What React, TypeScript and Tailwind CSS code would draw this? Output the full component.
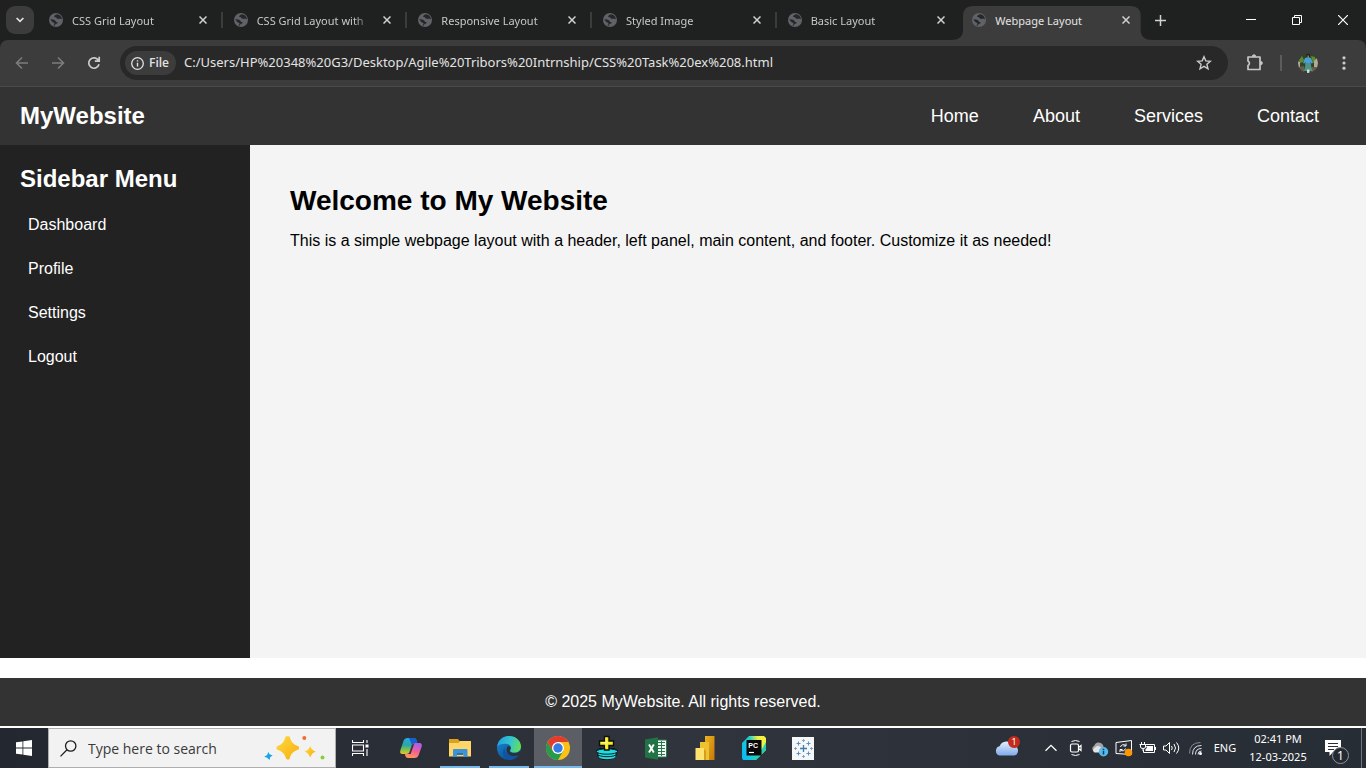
import type { ReactNode } from "react";

const tabs = [
  "CSS Grid Layout",
  "CSS Grid Layout with",
  "Responsive Layout",
  "Styled Image",
  "Basic Layout",
  "Webpage Layout",
];

const navLinks = ["Home", "About", "Services", "Contact"];
const menuLinks = ["Dashboard", "Profile", "Settings", "Logout"];

function GlobeIcon() {
  return (
    <svg className="size-3.5 shrink-0" viewBox="0 0 14 14" aria-hidden="true">
      <circle cx="7" cy="7" r="7" fill="#5f6368" />
      <path
        d="M8.2 1.3 6.1 1.9 5 3.4l1 .8 1.1 0 .7 1.2 1.5.5 1.5-.4 1.6.8.5-.9A6 6 0 0 0 8.2 1.3ZM1.2 6.3 4.3 6.6l1.9 1 .9 1.4 1.6.3-.5 1.2-1.7.6-.6 1.7A6 6 0 0 1 4.3 12l1.2-.5-.2-1.5-1.7-.8L2.3 7.7Z"
        fill="#25272a"
      />
    </svg>
  );
}

function CloseGlyph() {
  return (
    <svg className="size-2" viewBox="0 0 8 8" aria-hidden="true">
      <path d="M.5.5 7.5 7.5M7.5.5.5 7.5" stroke="#d0d1d1" strokeWidth="1.5" />
    </svg>
  );
}

function Tab({ title, active, divided }: { title: string; active: boolean; divided: boolean }) {
  return (
    <div className="relative flex h-10 min-w-0 flex-1 items-center pr-4 pl-[11px]">
      {active && (
        <svg
          className="absolute inset-y-0 left-0 h-10 w-full overflow-visible"
          viewBox="0 0 185 40"
          preserveAspectRatio="none"
          aria-hidden="true"
        >
          <path
            d="M-10 40Q2 40 2 30V16Q2 6 12 6H170Q180 6 180 16V30Q180 40 192 40Z"
            fill="#3c3c3c"
          />
        </svg>
      )}
      <button className="relative flex min-w-0 flex-1 items-center gap-[9px] text-left">
        <GlobeIcon />
        <span
          className={
            active
              ? "min-w-0 flex-1 overflow-hidden pt-px text-[11px] leading-5 whitespace-nowrap text-[#e3e3e3]"
              : "min-w-0 flex-1 overflow-hidden mask-r-from-85% pt-px text-[11px] leading-5 whitespace-nowrap text-[#c7c8c8]"
          }
        >
          {title}
        </span>
      </button>
      <button className="relative ml-3 flex size-2 items-center" aria-label={"Close " + title}>
        <CloseGlyph />
      </button>
      {divided && <span className="absolute top-3 right-0 h-4 w-0.5 bg-[#3c3c3c]" />}
    </div>
  );
}

function WindowButtons() {
  return (
    <div className="ml-auto flex">
      <button className="flex h-10 w-[46px] items-center justify-center" aria-label="Minimize">
        <svg width="10" height="10" viewBox="0 0 10 10">
          <path d="M0 4.5H10" stroke="#fff" />
        </svg>
      </button>
      <button className="flex h-10 w-[46px] items-center justify-center" aria-label="Restore">
        <svg width="10" height="10" viewBox="0 0 10 10" fill="none" stroke="#fff">
          <path d="M.5 2.5H7.5V9.5H.5ZM2.5 2.5V.5H9.5V7.5H7.5" />
        </svg>
      </button>
      <button className="flex h-10 w-[46px] items-center justify-center" aria-label="Close window">
        <svg width="10" height="10" viewBox="0 0 10 10">
          <path d="M0 0 10 10M10 0 0 10" stroke="#fff" strokeWidth="1.2" />
        </svg>
      </button>
    </div>
  );
}

function Avatar() {
  return (
    <svg width="20" height="20" viewBox="0 0 20 20" aria-hidden="true">
      <defs>
        <clipPath id="avatar">
          <circle cx="10" cy="10" r="10" />
        </clipPath>
      </defs>
      <g clipPath="url(#avatar)">
        <path d="M0 0H20V20H0Z" fill="#2f4428" />
        <path d="M1 7 4 3 6 7 5 9 2 10ZM13 3 17 4 18 8 15 10Z" fill="#5f8a35" />
        <path d="M0 8 2 9 2 15 0 16ZM16 8 20 4V17L16 14Z" fill="#b5a996" />
        <path d="M0 14 6 13 6 20H0ZM14 14 19 14 17 20H13Z" fill="#6b5a4e" />
        <path d="M8.5 1H12V4H8.5Z" fill="#2a201c" />
        <path d="M9.5 2.5H11V4.5H9.5Z" fill="#a87860" />
        <path d="M7 5 10 4.3 13 5 15 10 13.5 10.5 12.5 9V12H7.5V9L6.3 10.5 5 10Z" fill="#4a9fd4" />
        <path d="M7.8 10H12.4L14.5 18H6Z" fill="#4f9487" />
        <path d="M9 16.5H11.5V20H9Z" fill="#dcd5d0" />
      </g>
    </svg>
  );
}

function Browser() {
  return (
    <header className="bg-[#1f2120] font-['Noto_Sans',sans-serif]">
      <div className="flex h-10 items-center pl-1.5">
        <button
          className="mr-1 flex size-7 shrink-0 items-center justify-center rounded-[9px] bg-[#3c3c3c]"
          aria-label="Search tabs"
        >
          <svg width="8" height="6" viewBox="0 0 8 6" fill="none" stroke="#e3e3e3" strokeWidth="1.7">
            <path d="M.6 1 4 4.4 7.4 1" />
          </svg>
        </button>
        <div className="flex max-w-[1108px] min-w-0 flex-1">
          {tabs.map((title, i) => (
            <Tab key={title} title={title} active={i === 5} divided={i < 4} />
          ))}
        </div>
        <button className="flex size-7 items-center justify-center" aria-label="New tab">
          <svg width="11" height="11" viewBox="0 0 11 11" stroke="#d0d1d1" strokeWidth="1.5">
            <path d="M5.5 0V11M0 5.5H11" />
          </svg>
        </button>
        <WindowButtons />
      </div>
      <div className="flex h-[47px] items-center rounded-t-lg border-b border-[#4a4a4a] bg-[#3c3c3c] pr-3">
        <div className="flex w-[120px] shrink-0 items-center gap-[22px] pl-[15px]">
          <button className="size-3.5" aria-label="Back">
            <svg width="14" height="14" viewBox="0 0 14 14" fill="none" stroke="#7c7c7c" strokeWidth="1.6">
              <path d="M13 7H2M7 1.5 1.5 7 7 12.5" />
            </svg>
          </button>
          <button className="size-3.5" aria-label="Forward">
            <svg width="14" height="14" viewBox="0 0 14 14" fill="none" stroke="#7c7c7c" strokeWidth="1.6">
              <path d="M1 7H12M7 1.5 12.5 7 7 12.5" />
            </svg>
          </button>
          <button className="size-3.5" aria-label="Reload">
            <svg width="14" height="14" viewBox="0 0 14 14" fill="none" stroke="#cbcbcb" strokeWidth="1.7">
              <path d="M11.5 4.5A5.2 5.2 0 1 0 12 8.3M12.2.8V5.1H7.8" />
            </svg>
          </button>
        </div>
        <div className="flex h-[34px] min-w-0 flex-1 items-center rounded-full bg-[#282828] pr-4 pl-[5px]">
          <button className="mr-2 flex h-6 w-[51px] shrink-0 items-center justify-start gap-[5px] rounded-full bg-[#3c3c3c] pl-1.5 font-['Open_Sans',sans-serif] text-xs font-semibold text-[#e3e3e3]">
            <svg width="13" height="13" viewBox="0 0 13 13" aria-hidden="true">
              <circle cx="6.5" cy="6.5" r="5.8" fill="none" stroke="#e3e3e3" strokeWidth="1.3" />
              <path d="M6.5 5.7V9.6M6.5 3.2V4.6" stroke="#e3e3e3" strokeWidth="1.4" />
            </svg>
            File
          </button>
          <input
            className="min-w-0 flex-1 bg-transparent text-[13px] text-[#e3e3e3] outline-none"
            aria-label="Address"
            defaultValue="C:/Users/HP%20348%20G3/Desktop/Agile%20Tribors%20Intrnship/CSS%20Task%20ex%208.html"
          />
          <button className="size-4" aria-label="Bookmark">
            <svg width="16" height="16" viewBox="0 0 16 16" fill="none" stroke="#cbcbcb" strokeWidth="1.4">
              <path d="M8 1.7 9.8 5.9 14.4 6.3 10.9 9.3 12 13.8 8 11.4 4 13.8 5.1 9.3 1.6 6.3 6.2 5.9Z" />
            </svg>
          </button>
        </div>
        <div className="flex items-center">
          <button className="ml-[18px] size-[18px]" aria-label="Extensions">
            <svg width="18" height="18" viewBox="0 0 18 18" fill="none" stroke="#c7c7c7" strokeWidth="1.7">
              <path d="M2 3H14V15.5H2V11.5A2.5 2.5 0 0 0 2 7Z" strokeLinejoin="round" />
              <path d="M6.2 2.5A1.8 1.8 0 0 1 9.8 2.5ZM14.6 7.3A1.8 1.8 0 0 1 14.6 10.9Z" fill="#c7c7c7" strokeWidth=".8" />
            </svg>
          </button>
          <span className="ml-4 h-4 w-0.5 bg-[#5c5c5c]" />
          <button className="ml-4 size-5" aria-label="Profile">
            <Avatar />
          </button>
          <button className="ml-4 flex h-5 w-5 items-center justify-center" aria-label="Browser menu">
            <svg width="4" height="14" viewBox="0 0 4 14" fill="#cbcbcb">
              <circle cx="2" cy="1.8" r="1.6" />
              <circle cx="2" cy="7" r="1.6" />
              <circle cx="2" cy="12.2" r="1.6" />
            </svg>
          </button>
        </div>
      </div>
    </header>
  );
}

function WebPage() {
  return (
    <div className="flex flex-1 flex-col font-['Liberation_Sans',Arial,sans-serif]">
      <header className="flex h-[58px] items-center justify-between bg-[#333] px-5 text-white">
        <h2 className="text-2xl font-bold">MyWebsite</h2>
        <nav className="flex">
          {navLinks.map((label) => (
            <a key={label} href="#" className="px-[27px] text-lg">
              {label}
            </a>
          ))}
        </nav>
      </header>
      <div className="flex flex-1">
        <aside className="w-[250px] shrink-0 bg-[#222] p-5 text-white">
          <h2 className="text-2xl leading-7 font-bold">Sidebar Menu</h2>
          <ul className="mt-2.5">
            {menuLinks.map((label) => (
              <li key={label}>
                <a href="#" className="block px-2 text-base leading-[44px]">
                  {label}
                </a>
              </li>
            ))}
          </ul>
        </aside>
        <main className="min-w-0 flex-1 bg-[#f4f4f4] p-10 text-black">
          <h1 className="text-[28px] leading-8 font-bold">Welcome to My Website</h1>
          <p className="mt-3 text-base">
            This is a simple webpage layout with a header, left panel, main content, and footer. Customize it as needed!
          </p>
        </main>
      </div>
      <footer className="mt-5 mb-0.5 flex h-12 items-center justify-center bg-[#333] text-base text-white">
        © 2025 MyWebsite. All rights reserved.
      </footer>
    </div>
  );
}

function Sparkles() {
  return (
    <svg width="62" height="26" viewBox="0 0 62 26" aria-hidden="true">
      <defs>
        <linearGradient id="gold" x1="0" y1="0" x2="1" y2="1">
          <stop offset="0" stopColor="#ffda3b" />
          <stop offset="1" stopColor="#f7ad12" />
        </linearGradient>
      </defs>
      <path d="M21.5 1.5Q24 .8 25.7 1.5C27 7 29 9.5 34.5 11.2Q36 13 34.5 14.5C29 16.5 27 18.5 25.5 24Q24 25 22.3 24C20.5 18.5 18.5 16.5 13 14.5Q11.6 13 13 11.2C18.5 9.5 20 7 21.5 1.5Z" fill="url(#gold)" />
      <path d="M46.2 11Q47.5 15.3 51.7 16.5Q47.7 18 46.2 22.5Q44.8 18 40.6 16.5Q44.8 15.3 46.2 11Z" fill="url(#gold)" />
      <path d="M4.2 17 5.6 19.3 8.7 20.5 6.3 22 5.5 25 3.2 22.8.2 21.8 3.2 20Z" fill="#15a5ea" />
      <circle cx="40.3" cy="3" r="2" fill="#f36c2c" />
      <circle cx="58.5" cy="22.5" r="2" fill="#91c83e" />
    </svg>
  );
}

function CopilotIcon() {
  return (
    <svg width="24" height="24" viewBox="0 0 24 24">
      <defs>
        <linearGradient id="cpl" x1="0" y1="0" x2="0" y2="1">
          <stop offset="0" stopColor="#2aa8ec" />
          <stop offset=".45" stopColor="#29a8a0" />
          <stop offset=".75" stopColor="#83c54a" />
          <stop offset="1" stopColor="#f3c22c" />
        </linearGradient>
        <linearGradient id="cpr" x1=".6" y1="0" x2=".3" y2="1">
          <stop offset="0" stopColor="#a95df0" />
          <stop offset=".5" stopColor="#f0609a" />
          <stop offset="1" stopColor="#ff9b54" />
        </linearGradient>
      </defs>
      <path d="M8.5 2H15Q17 2 17.7 4.5L18.3 7H15.5Q13.3 7 12.6 9.5L10.5 16Q9.7 18 7.5 18H3.5Q.5 18 1.3 14.5L4.5 5Q5.5 2 8.5 2Z" fill="url(#cpl)" />
      <path d="M10 2H15Q17 2 17.7 4.5L18.3 7H15.5Q13.5 7 12.8 8.8Z" fill="#1760d2" />
      <path d="M15.5 22H9Q7 22 6.4 20L5.7 17.5H8.5Q10.5 17.5 11.3 15L13.4 9Q14.2 7 16.4 7H20.5Q23.5 7 22.7 10.5L19.5 19.5Q18.5 22 15.5 22Z" fill="url(#cpr)" />
      <path d="M12 13 13.4 9 15.3 7.6 11.6 18H8.8Q10.7 17.5 11.3 15Z" fill="#2c3039" />
    </svg>
  );
}

function ExplorerIcon() {
  return (
    <svg width="22" height="20" viewBox="0 0 22 20">
      <path d="M0 1H9L11 3.5H21.5V17.5H0Z" fill="#dca11b" />
      <path d="M0 5H9.5L11 3H22V18.5H0Z" fill="#ffd667" />
      <path d="M4 19V12Q4 11 5 11H17.5Q18.5 11 18.5 12V19H14.5V15H8V19Z" fill="#3e93d6" />
      <path d="M8 15H14.5V17H8Z" fill="#2676b7" />
    </svg>
  );
}

function EdgeIcon() {
  return (
    <svg width="24" height="24" viewBox="0 0 24 24">
      <defs>
        <linearGradient id="edgeTop" x1="0" y1=".3" x2="1" y2=".5">
          <stop offset="0" stopColor="#239fe0" />
          <stop offset=".55" stopColor="#35c5cd" />
          <stop offset="1" stopColor="#62df58" />
        </linearGradient>
        <linearGradient id="edgeLow" x1="0" y1="0" x2=".7" y2="1">
          <stop offset="0" stopColor="#188ddb" />
          <stop offset="1" stopColor="#0b4c8d" />
        </linearGradient>
      </defs>
      <circle cx="12" cy="12" r="12" fill="url(#edgeLow)" />
      <path d="M.2 10.5C1.2 4 6 0 12 0c7 0 12 5 12 10.5 0 4-3 6-6.5 6-3 0-4.800-1-4.300-2.200C15.500 11 13 8 9 7.800 5 7.500 1.300 8.800.2 10.500Z" fill="url(#edgeTop)" />
      <path d="M9.500 9.500C5.500 12.500 8 18.200 14.500 19.700c3 .7 6.200-.2 7.500-.9C19.500 22.500 15.500 24 12 24 6.500 22.700 3 15.500 9.500 9.500Z" fill="#1054a1" />
      <path d="M13 14C11.800 15.500 13.500 17 17 17.200c3 .1 5.500-1.100 6.500-2.700.5 2-1 4-1.900 4.700-5.600 2.200-12.900-.3-12-6.200.2-1.300.9-2.300 1.700-2.900 1.900.5 2.900 2 1.700 3.900Z" fill="#2c3039" />
    </svg>
  );
}

function ChromeIcon() {
  return (
    <svg width="24" height="24" viewBox="0 0 24 24">
      <circle cx="12" cy="12" r="12" fill="#fbc116" />
      <path d="M12 12 17.2 15 12 24A12 12 0 0 1 1.6 6L6.8 15Z" fill="#269b4b" />
      <path d="M12 6H22.4A12 12 0 0 0 1.6 6L6.8 15 12 12Z" fill="#e33b2e" />
      <circle cx="12" cy="12" r="6" fill="#fff" />
      <circle cx="12" cy="12" r="4.7" fill="#347be5" />
    </svg>
  );
}

function DiscPlusIcon() {
  return (
    <svg width="24" height="26" viewBox="0 0 24 26">
      <path d="M1 15.5 5 13H19L23 15.5V17L21.5 18 22 20 19 21.5V23L14 25H8L4 23 2 20 2.5 18 1 17Z" fill="#071012" />
      <ellipse cx="12" cy="21.5" rx="8.500" ry="2.700" fill="#24d9df" />
      <ellipse cx="12" cy="19" rx="9.500" ry="2.700" fill="#24d9df" stroke="#06282b" />
      <ellipse cx="12" cy="16.500" rx="10.500" ry="2.700" fill="#24d9df" stroke="#06282b" />
      <path d="M9.500 1.500H14V6H18.500V10.500H14V15H9.500V10.500H4.500V6H9.500Z" fill="#f7ed20" stroke="#101006" strokeWidth="1.4" />
      <path d="M11 2.500V13M6 7.500H13" stroke="#fff78b" />
    </svg>
  );
}

function ExcelIcon() {
  return (
    <svg width="22" height="23" viewBox="0 0 22 23">
      <path d="M12 3H21.5V20H12Z" fill="#f3f7f4" stroke="#277a4c" strokeWidth="1" />
      <path d="M13 5.5H20M13 8.5H20M13 11.5H20M13 14.5H20M13 17.5H20" stroke="#277a4c" />
      <path d="M16.5 4V19" stroke="#277a4c" />
      <path d="M0 2.5 13 .2V22.8L0 20.5Z" fill="#217346" />
      <path d="M4 7.5 8.8 15.5M8.8 7.5 4 15.5" stroke="#fff" strokeWidth="1.9" />
    </svg>
  );
}

function PowerBiIcon() {
  return (
    <svg width="20" height="24" viewBox="0 0 20 24">
      <defs>
        <linearGradient id="pbi" x1="0" y1="0" x2="1" y2="1">
          <stop offset="0" stopColor="#eeb41f" />
          <stop offset="1" stopColor="#c57708" />
        </linearGradient>
      </defs>
      <path d="M10 0H19.5V24H10Z" fill="url(#pbi)" />
      <path d="M5 6H14V24H5Z" fill="#edc22f" />
      <path d="M.5 12H9V24H.5Z" fill="#ffe36f" />
      <path d="M9 13 11 15V24H9Z" fill="#d89c1d" />
    </svg>
  );
}

function PyCharmIcon() {
  return (
    <svg width="24" height="24" viewBox="0 0 24 24">
      <defs>
        <linearGradient id="pyc" x1="0" y1=".6" x2="1" y2=".2">
          <stop offset="0" stopColor="#0bbcf0" />
          <stop offset=".45" stopColor="#20cfca" />
          <stop offset=".75" stopColor="#f2ef45" />
        </linearGradient>
      </defs>
      <path d="M7 0H22L24 2V14L14 24H1L0 22V7Z" fill="url(#pyc)" />
      <path d="M24 6V14L14 24H10L20 13Z" fill="#21d0b4" />
      <path d="M4.5 4H19.5V19.5H4.5Z" fill="#080808" />
      <text x="6.3" y="12" fontSize="7" fontWeight="700" fill="#fff" fontFamily="Liberation Sans">
        PC
      </text>
      <path d="M7 16.5H12" stroke="#fff" strokeWidth="1.2" />
    </svg>
  );
}

function TableauIcon() {
  return (
    <svg width="22" height="23" viewBox="0 0 22 23" fill="none" stroke="#7fa6c6">
      <path d="M0 0H22V23H0Z" fill="#f5f6f7" stroke="none" />
      <path d="M11.5 8V15M8 11.5H15" stroke="#3c7cae" strokeWidth="1.3" />
      <path d="M11.5 2V5M10 3.5H13M11.5 18V21M10 19.5H13M3.5 10V13M2 11.5H5M19.5 10V13M18 11.5H21" />
      <path d="M6.5 4.5V8.5M4.5 6.5H8.5M16.5 4.5V8.5M14.5 6.5H18.5M6.5 14.5V18.5M4.5 16.5H8.5M16.5 14.5V18.5M14.5 16.5H18.5" stroke="#5c90b9" />
    </svg>
  );
}

function TaskButton({ label, running, active, children }: { label: string; running?: boolean; active?: boolean; children: ReactNode }) {
  return (
    <button
      aria-label={label}
      className={
        active
          ? "relative flex h-10 w-12 items-center justify-center bg-[#5b5e65]"
          : "relative flex h-10 w-12 items-center justify-center"
      }
    >
      {children}
      {running && (
        <span
          className={
            active
              ? "absolute inset-x-0 bottom-0 h-0.5 bg-[#76b9ed]"
              : "absolute inset-x-1 bottom-0 h-0.5 bg-[#76b9ed]"
          }
        />
      )}
    </button>
  );
}

function TrayButton({ label, children }: { label: string; children: ReactNode }) {
  return (
    <button className="flex h-10 w-6 items-center justify-center" aria-label={label}>
      <svg width="18" height="18" viewBox="0 0 18 18" fill="none" stroke="#fff" strokeWidth="1">
        {children}
      </svg>
    </button>
  );
}

function Taskbar() {
  return (
    <footer className="flex h-10 items-center bg-linear-to-r from-[#222730] via-[#30343c] to-[#272d35] font-['Noto_Sans',sans-serif] text-white">
      <button className="flex h-10 w-12 items-center justify-center" aria-label="Start">
        <svg width="16" height="16" viewBox="0 0 16 16" fill="#fff">
          <path d="M0 2.3 6.5 1.4V7.5H0ZM7.3 1.3 16 0V7.5H7.3ZM0 8.4H6.5V14.6L0 13.7ZM7.3 8.4H16V16L7.3 14.8Z" />
        </svg>
      </button>
      <label className="flex h-10 w-72 items-center border border-[#aeaeae] bg-[#f2f2f2] pr-[9px] pl-[11px]">
        <svg width="17" height="17" viewBox="0 0 17 17" fill="none" stroke="#1d1d1d" strokeWidth="1.3" aria-hidden="true">
          <circle cx="10.7" cy="6" r="5.2" />
          <path d="M7 9.8.5 16.4" />
        </svg>
        <input
          className="ml-[11px] min-w-0 flex-1 bg-transparent pt-px font-['Open_Sans',sans-serif] text-sm text-[#333] outline-none placeholder:text-[#3a3a3a]"
          type="search"
          aria-label="Type here to search"
          placeholder="Type here to search"
        />
        <Sparkles />
      </label>
      <button className="mr-[3px] flex h-10 w-12 items-center justify-center" aria-label="Task view">
        <svg width="17" height="16" viewBox="0 0 17 16" fill="none" stroke="#fff">
          <path d="M.5 0V2.5H11.5V0M.5 16V13.5H11.5V16M.5 5H11.5V11H.5ZM15 0V3M15 9V16" strokeWidth="1.1" />
          <path d="M13.5 4.5H16.5V7.5H13.5Z" fill="#fff" stroke="none" />
        </svg>
      </button>
      <div className="flex gap-px">
        <TaskButton label="Copilot"><CopilotIcon /></TaskButton>
        <TaskButton label="File Explorer" running><ExplorerIcon /></TaskButton>
        <TaskButton label="Microsoft Edge" running><EdgeIcon /></TaskButton>
        <TaskButton label="Google Chrome" running active><ChromeIcon /></TaskButton>
        <TaskButton label="Disc tool"><DiscPlusIcon /></TaskButton>
        <TaskButton label="Excel"><ExcelIcon /></TaskButton>
        <TaskButton label="Power BI"><PowerBiIcon /></TaskButton>
        <TaskButton label="PyCharm"><PyCharmIcon /></TaskButton>
        <TaskButton label="Tableau"><TableauIcon /></TaskButton>
      </div>

      <div className="ml-auto flex items-center">
        <button className="relative mr-5 h-6 w-[26px]" aria-label="Weather, 1 alert">
          <svg width="26" height="24" viewBox="0 0 26 24" aria-hidden="true">
            <defs>
              <linearGradient id="cloud" x1="0" y1="0" x2="0" y2="1">
                <stop offset="0" stopColor="#e6effb" />
                <stop offset="1" stopColor="#7eaaea" />
              </linearGradient>
            </defs>
            <path d="M5.5 19.5A4.8 4.8 0 0 1 5.6 10.2 7.5 7.5 0 0 1 19.3 9.5 5.1 5.1 0 0 1 20.3 19.5Z" fill="url(#cloud)" />
          </svg>
          <span className="absolute top-0 right-0 flex size-3 items-center justify-center rounded-full bg-[#c42b1c] text-[9px] leading-3">
            1
          </span>
        </button>
        <TrayButton label="Show hidden icons">
          <path d="M2.5 11.8 8 6.3 13.5 11.8" strokeWidth="1.3" />
        </TrayButton>
        <TrayButton label="Meet now">
          <path d="M4.5 2.5Q8.5.5 12.5 2.5M4.5 15.5Q8.5 17.5 12.5 15.5" />
          <path d="M5 5H10Q11.5 5 11.5 6.500V11.500Q11.500 13 10 13H5Q3.500 13 3.500 11.500V6.500Q3.500 5 5 5ZM11.500 8.500 14 6.500V11.500L11.500 9.500" strokeWidth="1.2" />
        </TrayButton>
        <TrayButton label="OneDrive">
          <path d="M3.5 12.5A3 3 0 0 1 3.2 6.8 4.8 4.8 0 0 1 12 6L14 12.5Z" fill="#a5a5a5" stroke="none" />
          <path d="M3.5 13.5A2.5 2.5 0 0 1 3.5 9Q6.5 5.5 9.5 8L12 13.5Z" fill="#e4e4e4" stroke="none" />
          <circle cx="12.5" cy="12.8" r="4.7" fill="#52bcec" stroke="none" />
          <path d="M12.5 11.8V15.5M12.5 9.7V11" stroke="#12394c" strokeWidth="1.5" />
        </TrayButton>
        <TrayButton label="Windows Update">
          <path d="M1 3.5 16.5 1.5V15.5L1 14.5Z" />
          <path d="M5.5 8A3 3 0 0 1 10.5 6.5M11 4.5V7H8.5M10.5 9.5A3 3 0 0 1 5.5 11M5 13V10.5H7.5" />
          <circle cx="13.5" cy="13.5" r="3.8" fill="#ff9800" stroke="none" />
        </TrayButton>
        <TrayButton label="Battery">
          <path d="M7 5.5H15.5V13.5H4.5V10.5" />
          <path d="M7 7H14V12H6.5V10L8 9ZM16 8H17V11H16Z" fill="#fff" stroke="none" />
          <path d="M2.5 3V5.5M5.5 3V5.5M.5 5.5H7.5M1.5 5.5V8Q1.5 9.5 4 9.5T6.5 8V5.5M4 9.5V12" />
        </TrayButton>
        <TrayButton label="Volume">
          <path d="M.5 7H3L6.5 3.5V14.5L3 11H.5ZM8.5 7Q10 9 8.5 11M11 5Q14 9 11 13M13.5 3.5Q18 9 13.5 14.5" />
        </TrayButton>
        <TrayButton label="Wi-Fi">
          <path d="M5.5 15.5Q5.5 6.5 14.5 6.5M8.5 15.5Q8.5 9.5 14.5 9.5M11 15.5Q11 12 14.5 12" stroke="#e4e5e6" />
          <path d="M2.5 14.5Q2.5 3.5 13.5 3.5" stroke="#888c91" />
          <circle cx="13.5" cy="14.5" r="1.5" fill="#fff" stroke="none" />
        </TrayButton>
        <button className="w-[34px] text-center text-[11px]">ENG</button>
        <button className="w-[72px] text-center text-[11px] leading-[18px]">
          <span className="block">02:41 PM</span>
          <span className="block">12-03-2025</span>
        </button>
        <button className="relative h-10 w-[47px]" aria-label="Notifications">
          <svg className="absolute top-3 left-[11px]" width="17" height="16" viewBox="0 0 17 16">
            <path d="M0 0H16V12H8L4.5 16V12H0Z" fill="#fff" />
            <path d="M3 3.5H13M3 6.5H13M3 9.5H9" stroke="#2a3038" />
          </svg>
          <span className="absolute top-[19px] left-[18px] flex size-[17px] items-center justify-center rounded-full border border-[#92969b] bg-[#252a31] text-xs">
            1
          </span>
        </button>
        <span className="h-10 w-[5px] border-l border-[#72767b]" />
      </div>
    </footer>
  );
}

export default function App() {
  return (
    <div className="flex min-h-screen flex-col bg-white">
      <Browser />
      <WebPage />
      <Taskbar />
    </div>
  );
}
